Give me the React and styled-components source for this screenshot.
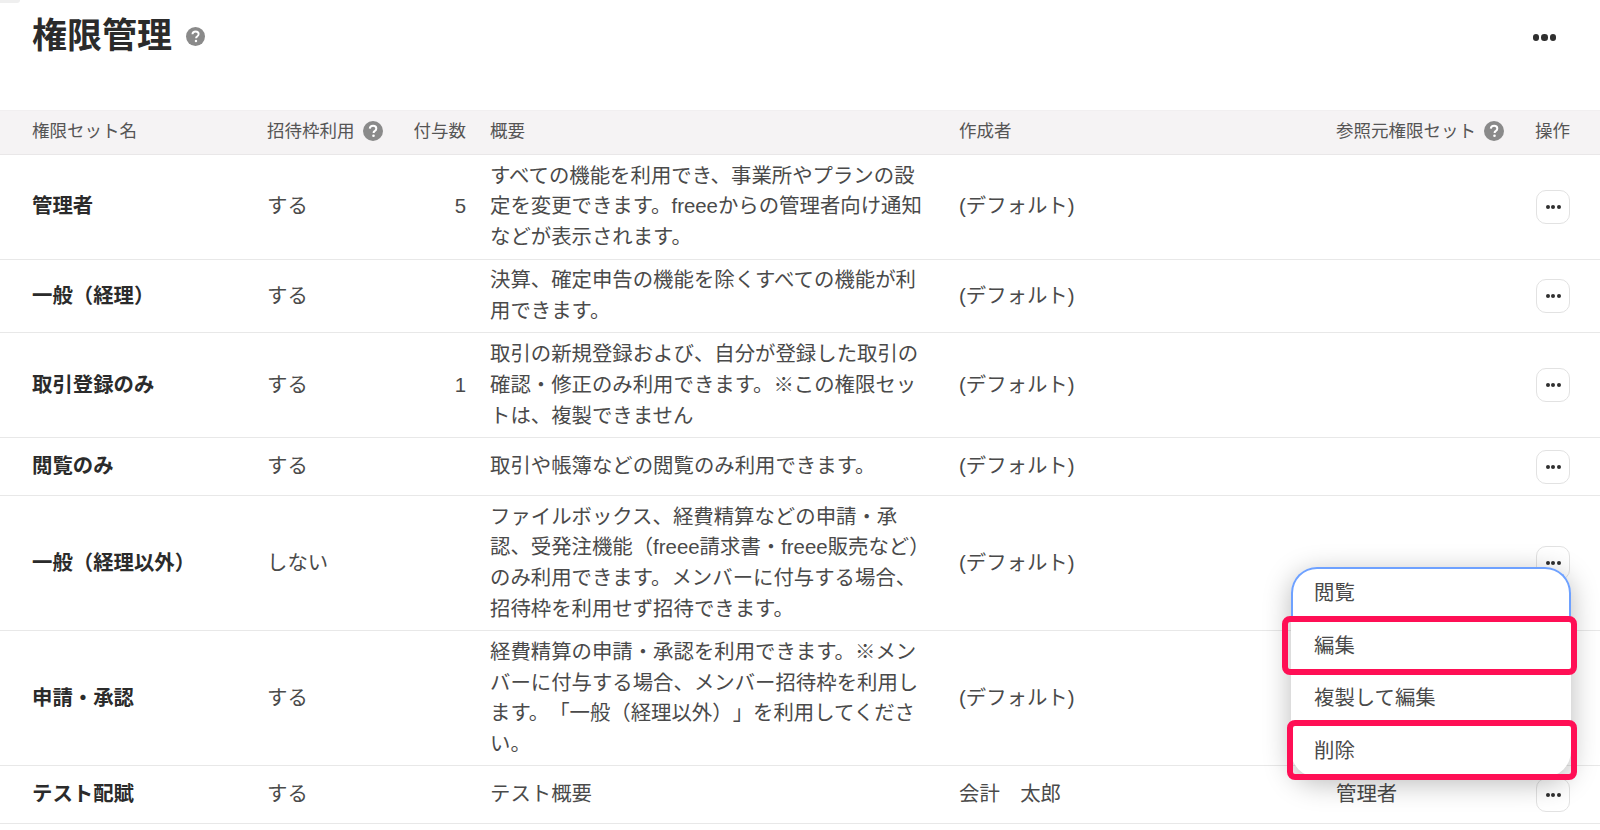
import React from 'react';
import styled, { createGlobalStyle } from 'styled-components';

const GlobalStyle = createGlobalStyle`
  html, body {
    margin: 0;
    padding: 0;
    background: #fff;
    overflow: hidden;
  }
  body {
    font-family: "Liberation Sans", "Noto Sans CJK JP", sans-serif;
    color: #323232;
    text-spacing-trim: space-all;
  }
`;

const Page = styled.div`
  position: relative;
  width: 1600px;
  height: 830px;
  overflow: hidden;
`;

const PageTab = styled.div`
  position: absolute;
  top: 0;
  left: 0;
  width: 20px;
  height: 3px;
  background: #efefef;
  border-radius: 0 0 4px 0;
`;

const PageHeader = styled.header`
  height: 110px;
  padding: 12px 32px 0 32px;
  box-sizing: border-box;
  display: flex;
  align-items: flex-start;
  justify-content: space-between;
`;

const TitleGroup = styled.div`
  display: flex;
  align-items: center;
  gap: 14px;
`;

const Title = styled.h1`
  margin: 0;
  font-size: 35px;
  line-height: 48px;
  font-weight: 700;
  color: #2b2b2b;
`;

const MoreButton = styled.div`
  display: flex;
  gap: 2px;
  padding: 22px 12px 0 0;
`;

const Dot = styled.span`
  width: ${(p) => p.$size}px;
  height: ${(p) => p.$size}px;
  border-radius: 50%;
  background: #2f2f2f;
`;

const Table = styled.table`
  width: 1600px;
  border-collapse: collapse;
  table-layout: fixed;
`;

const HeadRow = styled.tr`
  height: 44px;
  background: #f5f3f4;
  border-bottom: 1px solid #e9e7e8;
  border-top: 1px solid #f1eff0;
`;

const HeadCell = styled.th`
  padding: 0 ${(p) => p.$right || 0}px 7px ${(p) => p.$left || 0}px;
  font-size: 17.5px;
  font-weight: 400;
  color: #555;
  text-align: ${(p) => p.$align || 'left'};
  white-space: nowrap;
`;

const HeadInner = styled.span`
  display: inline-flex;
  align-items: center;
  gap: 8px;

  svg {
    margin-top: 4px;
  }
`;

const Row = styled.tr`
  border-bottom: 1px solid #e8e8e8;
`;

const Cell = styled.td`
  padding: 5.875px ${(p) => p.$right || 0}px 5.875px ${(p) => p.$left || 0}px;
  font-size: 20.4px;
  line-height: 30.6px;
  font-weight: ${(p) => (p.$bold ? 700 : 400)};
  color: ${(p) => (p.$bold ? '#2b2b2b' : '#4a4a4a')};
  text-align: ${(p) => p.$align || 'left'};
  vertical-align: middle;
`;

const ActionCell = styled.td`
  padding: 11.5px 30px 11.5px 0;
  text-align: right;
  vertical-align: middle;
`;

const ActionButton = styled.div`
  display: inline-flex;
  align-items: center;
  justify-content: center;
  gap: 1.5px;
  width: 34px;
  height: 34px;
  box-sizing: border-box;
  vertical-align: middle;
  background: #fff;
  border: 1px solid #e2e2e2;
  border-radius: 10px;
`;

const Menu = styled.div`
  position: absolute;
  left: 1291px;
  top: 567px;
  width: 280px;
  height: 210px;
  box-sizing: border-box;
  padding-top: 2px;
  background: #fff;
  border-radius: 26px;
  box-shadow: 0 6px 28px rgba(0, 0, 0, 0.28);

  &::before {
    content: '';
    position: absolute;
    top: 0;
    left: 0;
    right: 0;
    height: 52px;
    box-sizing: border-box;
    border: 2.5px solid #6ea1ff;
    border-bottom: none;
    border-radius: 26px 26px 0 0;
  }
`;

const MenuItem = styled.div`
  position: relative;
  height: 52.6px;
  box-sizing: border-box;
  display: flex;
  align-items: center;
  padding: 0 0 8px 23px;
  font-size: 20.4px;
  color: #4a4a4a;
`;

const Callout = styled.span`
  position: absolute;
  top: ${(p) => p.$top}px;
  left: ${(p) => p.$left}px;
  width: ${(p) => p.$width}px;
  height: ${(p) => p.$height}px;
  box-sizing: border-box;
  border: 6.5px solid #ff0f55;
  border-radius: 8px;
`;

const HelpIcon = ({ size = 20 }) => (
  <svg width={size} height={size} viewBox="0 0 20 20" style={{ flexShrink: 0 }}>
    <circle cx="10" cy="10" r="10" fill="#8a8a8a" />
    <path
      d="M6.8 7.6C6.9 5.7 8.3 4.7 10.1 4.7c1.9 0 3.2 1.1 3.2 2.7 0 1.3-.7 2-1.7 2.7-.8.5-1 .9-1 1.8"
      fill="none"
      stroke="#fff"
      strokeWidth="2"
    />
    <circle cx="10.5" cy="14.7" r="1.3" fill="#fff" />
  </svg>
);

const Dots = ({ size }) => (
  <>
    <Dot $size={size} />
    <Dot $size={size} />
    <Dot $size={size} />
  </>
);

const roles = [
  {
    name: '管理者',
    invite: 'する',
    count: '5',
    summary: 'すべての機能を利用でき、事業所やプランの設定を変更できます。freeeからの管理者向け通知などが表示されます。',
    author: '(デフォルト)',
  },
  {
    name: '一般（経理）',
    invite: 'する',
    summary: '決算、確定申告の機能を除くすべての機能が利用できます。',
    author: '(デフォルト)',
  },
  {
    name: '取引登録のみ',
    invite: 'する',
    count: '1',
    summary: '取引の新規登録および、自分が登録した取引の確認・修正のみ利用できます。※この権限セットは、複製できません',
    author: '(デフォルト)',
  },
  {
    name: '閲覧のみ',
    invite: 'する',
    summary: '取引や帳簿などの閲覧のみ利用できます。',
    author: '(デフォルト)',
  },
  {
    name: '一般（経理以外）',
    invite: 'しない',
    summary: 'ファイルボックス、経費精算などの申請・承認、受発注機能（freee請求書・freee販売など）のみ利用できます。メンバーに付与する場合、招待枠を利用せず招待できます。',
    author: '(デフォルト)',
  },
  {
    name: '申請・承認',
    invite: 'する',
    summary: '経費精算の申請・承認を利用できます。※メンバーに付与する場合、メンバー招待枠を利用します。「一般（経理以外）」を利用してください。',
    author: '(デフォルト)',
  },
  {
    name: 'テスト配賦',
    invite: 'する',
    summary: 'テスト概要',
    author: '会計　太郎',
    source: '管理者',
  },
];

export default function App() {
  return (
    <Page>
      <GlobalStyle />
      <PageTab />
      <PageHeader>
        <TitleGroup>
          <Title>権限管理</Title>
          <HelpIcon size={19} />
        </TitleGroup>
        <MoreButton>
          <Dots size={6.5} />
        </MoreButton>
      </PageHeader>
      <Table>
        <colgroup>
          <col style={{ width: 267 }} />
          <col style={{ width: 132 }} />
          <col style={{ width: 67 }} />
          <col style={{ width: 493 }} />
          <col style={{ width: 377 }} />
          <col style={{ width: 199 }} />
          <col style={{ width: 65 }} />
        </colgroup>
        <thead>
          <HeadRow>
            <HeadCell $left={32}>権限セット名</HeadCell>
            <HeadCell>
              <HeadInner>招待枠利用<HelpIcon /></HeadInner>
            </HeadCell>
            <HeadCell $align="right">付与数</HeadCell>
            <HeadCell $left={24}>概要</HeadCell>
            <HeadCell>作成者</HeadCell>
            <HeadCell>
              <HeadInner>参照元権限セット<HelpIcon /></HeadInner>
            </HeadCell>
            <HeadCell>操作</HeadCell>
          </HeadRow>
        </thead>
        <tbody>
          {roles.map((role) => (
            <Row key={role.name}>
              <Cell $bold $left={32}>{role.name}</Cell>
              <Cell>{role.invite}</Cell>
              <Cell $align="right">{role.count}</Cell>
              <Cell $left={24} $right={26}>{role.summary}</Cell>
              <Cell>{role.author}</Cell>
              <Cell>{role.source}</Cell>
              <ActionCell>
                <ActionButton>
                  <Dots size={4} />
                </ActionButton>
              </ActionCell>
            </Row>
          ))}
        </tbody>
      </Table>
      <Menu>
        <MenuItem>閲覧</MenuItem>
        <MenuItem>編集</MenuItem>
        <MenuItem>複製して編集</MenuItem>
        <MenuItem>削除</MenuItem>
      </Menu>
      <Callout $top={616} $left={1282} $width={295} $height={59} />
      <Callout $top={720} $left={1287} $width={290} $height={60} />
    </Page>
  );
}
